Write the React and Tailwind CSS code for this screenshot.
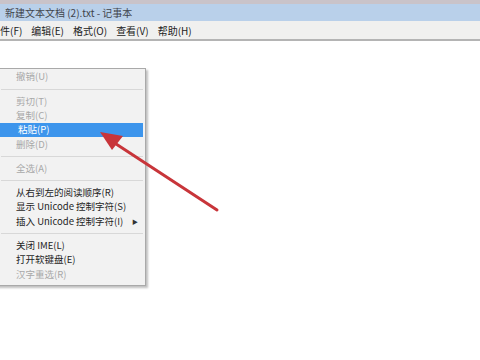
import React from 'react';

const font = { fontFamily: '"Microsoft YaHei", "Noto Sans CJK SC", "Liberation Sans", sans-serif' };

const items = [
  { label: '撤销(U)', disabled: true },
  { sep: true },
  { label: '剪切(T)', disabled: true },
  { label: '复制(C)', disabled: true },
  { label: '粘贴(P)', active: true },
  { label: '删除(D)', disabled: true },
  { sep: true },
  { label: '全选(A)', disabled: true },
  { sep: true },
  { label: '从右到左的阅读顺序(R)' },
  { label: '显示 Unicode 控制字符(S)' },
  { label: '插入 Unicode 控制字符(I)', sub: true },
  { sep: true },
  { label: '关闭 IME(L)' },
  { label: '打开软键盘(E)' },
  { label: '汉字重选(R)', disabled: true },
];

const menus = ['件(F)', '编辑(E)', '格式(O)', '查看(V)', '帮助(H)'];

const App = () => {
  return (
    <div className="relative w-[480px] h-[360px] overflow-hidden bg-white" style={font}>
      <div className="h-[4px] bg-[#c9c3c9]" />
      <div className="h-[17px] bg-[#b9d0ea] flex items-center pl-[5px] text-[10px] text-[#3f444c]">
        新建文本文档 (2).txt - 记事本
      </div>
      <div className="h-[20px] bg-[#f0f0ef] border-b-2 border-[#b4b4b4] flex items-center text-[10px] text-[#222] gap-[9px] pt-[1px]">
        {menus.map(m => (
          <span key={m}>{m}</span>
        ))}
      </div>

      <div className="absolute left-[-4px] top-[68px] w-[150px] bg-[#f2f2f2] border border-[#a9a9a9] shadow-[2px_2px_2px_rgba(0,0,0,0.25)] pt-[1px] pb-[3px] text-[9.5px]">
        {items.map((it, i) => it.sep ? (
          <div key={i} className="h-[10px] flex items-center pl-[4px] pr-[2px]">
            <div className="h-px w-full bg-[#d8d8d8]" />
          </div>
        ) : (
          <div
            key={i}
            className={`h-[14.3px] flex items-center pl-[19px] pr-[7px] leading-none ${it.active ? 'bg-[#3d95ec] text-white mx-[2px] pl-[17px] pr-[5px]' : ''} ${it.disabled ? 'text-[#a8a8a8]' : it.active ? '' : 'text-[#1e1e1e]'}`}
          >
            <span className="flex-1 whitespace-nowrap">{it.label}</span>
            {it.sub && <span className="text-[6px] text-[#333]">▶</span>}
          </div>
        ))}
      </div>

      <svg className="absolute left-0 top-0 pointer-events-none" width="480" height="360">
        <line x1="217" y1="210" x2="110" y2="140" stroke="#c8353a" strokeWidth="3" strokeLinecap="round" />
        <polygon points="100,132 123,136 112,150" fill="#c8353a" />
      </svg>
    </div>
  );
};

export default App;
